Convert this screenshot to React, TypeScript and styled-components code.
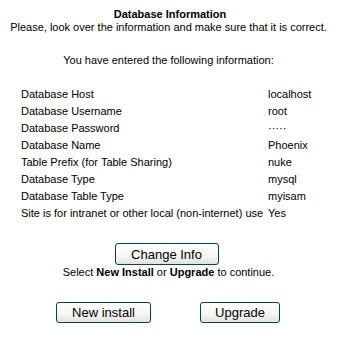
import React from "react";
import styled, { createGlobalStyle } from "styled-components";

const Global = createGlobalStyle`
  html, body { margin: 0; padding: 0; background: #fff; }
  body { font-family: "Liberation Sans", Arial, sans-serif; font-size: 11px; color: #000; }
`;

const Page = styled.div`
  width: 340px;
  height: 344px;
  display: flex;
  flex-direction: column;
  align-items: center;
  padding-top: 8px;
  box-sizing: border-box;
`;

const Title = styled.div`
  font-weight: bold;
  font-size: 11px;
  line-height: 13px;
`;

const Line = styled.div<{ $mt?: number }>`
  line-height: 13px;
  margin-top: ${(p) => p.$mt ?? 0}px;
  text-align: center;
  padding-right: 3px;
`;

const InfoTable = styled.div`
  margin-top: 19px;
  align-self: stretch;
  padding-left: 21px;
  display: grid;
  grid-template-columns: 247px auto;
  grid-auto-rows: 17px;
  align-items: center;
`;

const Cell = styled.div`
  white-space: nowrap;
  line-height: 13px;
`;

const Button = styled.button<{ $w: number; $h?: number }>`
  display: block;
  width: ${(p) => p.$w}px;
  height: ${(p) => p.$h ?? 21}px;
  font-family: "Liberation Sans", Arial, sans-serif;
  font-size: 13px;
  color: #000;
  background: linear-gradient(#ffffff, #f4f4f0 65%, #e2e1da);
  border: 1px solid #003c74;
  border-radius: 3px;
  padding: 0;
`;

const Single = styled.div`
  margin-top: 21px;
  display: flex;
  justify-content: center;
  padding-right: 7px;
`;

const ButtonRow = styled.div`
  margin-top: 23px;
  display: flex;
  gap: 49px;
  padding-right: 4px;
`;

export default function App() {
  const rows: [string, string][] = [
    ["Database Host", "localhost"],
    ["Database Username", "root"],
    ["Database Password", "·····"],
    ["Database Name", "Phoenix"],
    ["Table Prefix (for Table Sharing)", "nuke"],
    ["Database Type", "mysql"],
    ["Database Table Type", "myisam"],
    ["Site is for intranet or other local (non-internet) use", "Yes"],
  ];
  return (
    <>
      <Global />
      <Page>
        <Title>Database Information</Title>
        <Line>Please, look over the information and make sure that it is correct.</Line>
        <Line $mt={20}>You have entered the following information:</Line>
        <InfoTable>
          {rows.map(([k, v]) => (
            <React.Fragment key={k}>
              <Cell>{k}</Cell>
              <Cell>{v}</Cell>
            </React.Fragment>
          ))}
        </InfoTable>
        <Single>
          <Button $w={104} $h={22}>Change Info</Button>
        </Single>
        <Line $mt={1}>
          Select <b>New Install</b> or <b>Upgrade</b> to continue.
        </Line>
        <ButtonRow>
          <Button $w={95}>New install</Button>
          <Button $w={80}>Upgrade</Button>
        </ButtonRow>
      </Page>
    </>
  );
}
